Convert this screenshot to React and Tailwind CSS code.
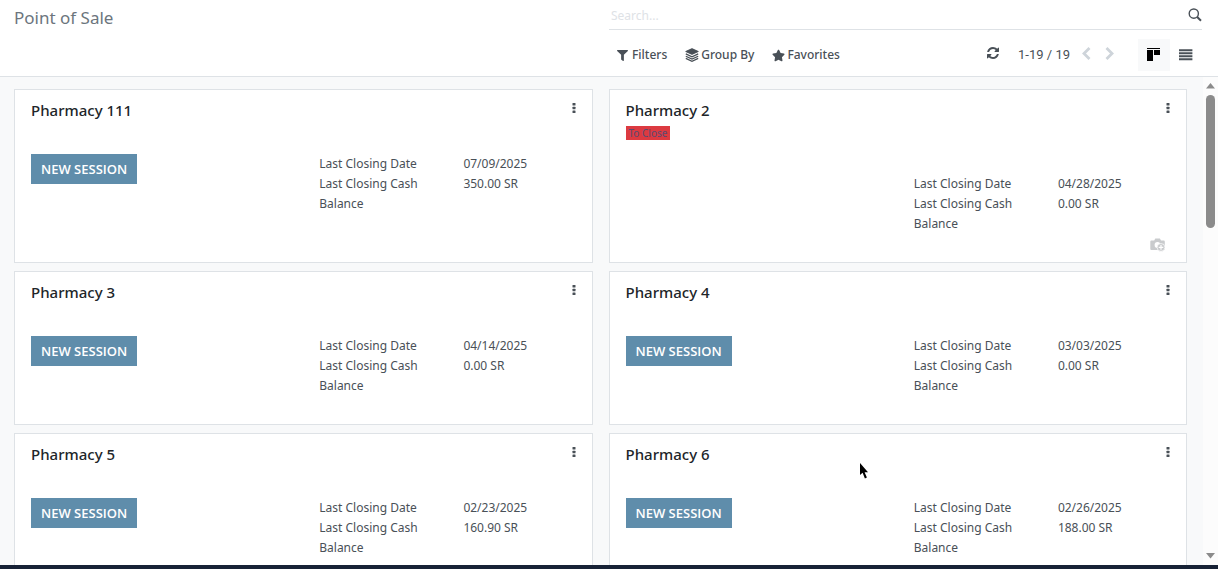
import React from "react";
import { FaFilter, FaStar } from "react-icons/fa";

const pointsOfSale = [
  { id: 1, name: "Pharmacy 111", date: "07/09/2025", balance: "350.00 SR" },
  { id: 2, name: "Pharmacy 2", date: "04/28/2025", balance: "0.00 SR", toClose: true },
  { id: 3, name: "Pharmacy 3", date: "04/14/2025", balance: "0.00 SR" },
  { id: 4, name: "Pharmacy 4", date: "03/03/2025", balance: "0.00 SR" },
  { id: 5, name: "Pharmacy 5", date: "02/23/2025", balance: "160.90 SR" },
  { id: 6, name: "Pharmacy 6", date: "02/26/2025", balance: "188.00 SR" },
];

const SearchIcon = () => (
  <svg width="14" height="14" viewBox="0 0 14 14" fill="none" stroke="currentColor" strokeWidth="1.4">
    <circle cx="5.8" cy="5.6" r="4.6" />
    <path d="M9.2 9l3.8 3.8" strokeWidth="2" />
  </svg>
);

const LayersIcon = () => (
  <svg width="14" height="14" viewBox="0 0 14 14" fill="none" stroke="currentColor" strokeWidth="1.2">
    <path d="M7 .8l6 2.7L7 6.2 1 3.5z" fill="currentColor" strokeLinejoin="round" />
    <path d="M.8 5.9L7 8.8l6.200-2.900" />
    <path d="M.8 8.2L7 11.1l6.200-2.900" />
    <path d="M.8 10.4L7 13.3l6.200-2.900" />
  </svg>
);

const RefreshIcon = () => (
  <svg width="14" height="14" viewBox="0 0 1792 1792" fill="currentColor">
    <path d="M1639 1056q0 5-1 7-64 268-268 434.5t-478 166.5q-146 0-282.5-55t-243.5-157l-129 129q-19 19-45 19t-45-19-19-45v-448q0-26 19-45t45-19h448q26 0 45 19t19 45-19 45l-137 137q71 66 161 102t187 36q134 0 250-65t186-179q11-17 53-117 8-23 30-23h192q13 0 22.5 9.5t9.5 22.5zm25-800v448q0 26-19 45t-45 19h-448q-26 0-45-19t-19-45 19-45l138-138q-148-137-349-137-134 0-250 65t-186 179q-11 17-53 117-8 23-30 23h-199q-13 0-22.5-9.5t-9.5-22.5v-7q65-268 270-434.5t480-166.5q146 0 284 55.5t245 156.5l130-129q19-19 45-19t45 19 19 45z" />
  </svg>
);

const KanbanIcon = () => (
  <svg width="14" height="14" viewBox="0 0 14 14" fill="currentColor" shapeRendering="crispEdges">
    <path d="M0 0h13v1H0zM0 2h6v11H0zM7 2h6v5H7z" />
  </svg>
);

const ListIcon = () => (
  <svg width="14" height="12" viewBox="0 0 14 12" fill="currentColor">
    <path d="M0 .2h13.4v2H0zM0 3.2h13.4v2H0zM0 6.2h13.4v2H0zM0 9.2h13.4v2H0z" />
  </svg>
);

const DotsIcon = () => (
  <svg width="4" height="12" viewBox="0 0 4 12" fill="currentColor">
    <rect x=".5" y="1" width="3" height="2.6" rx=".5" />
    <rect x=".5" y="4.7" width="3" height="2.6" rx=".5" />
    <rect x=".5" y="8.4" width="3" height="2.6" rx=".5" />
  </svg>
);

const CameraPlusIcon = () => (
  <svg width="16" height="14" viewBox="0 0 16 14">
    <path d="M1.6 2.4h2.6L5.3.6h4.6L11 2.4h2.5c.8 0 1.3.5 1.3 1.3v7c0 .8-.5 1.3-1.3 1.3H1.6C.8 12 .3 11.5.3 10.7v-7c0-.8.5-1.3 1.3-1.3z" fill="#c9cbcd" />
    <circle cx="7.5" cy="6.9" r="2.9" fill="#fff" />
    <circle cx="11" cy="9.4" r="3.9" fill="#c9cbcd" stroke="#fff" strokeWidth=".7" />
    <path d="M11 7.1v4.6M8.7 9.4h4.6" stroke="#fff" strokeWidth="1.2" />
  </svg>
);

const ControlPanel = () => {
  return (
    <header className="grid shrink-0 grid-cols-2 gap-4 border-b border-[#dee2e6] bg-white pr-4 text-[#495057]">
      <h1 className="pt-1 pl-3.5 text-[17px] leading-7 text-[#6c757d]">Point of Sale</h1>
      <div>
        <div className="flex h-[30px] items-center border-b border-[#dee2e6]">
          <input
            type="text"
            aria-label="Search"
            placeholder="Search..."
            className="min-w-0 flex-1 px-0.5 pt-0.5 text-xs outline-none placeholder:text-[#dee2e6]"
          />
          <button type="button" aria-label="Search">
            <SearchIcon />
          </button>
        </div>
        <div className="flex h-[46px] items-center justify-between pt-1">
          <div className="flex items-center gap-4.5 pl-2 text-xs font-medium">
            <button type="button" className="flex items-center gap-1">
              <FaFilter size={11} />
              Filters
            </button>
            <button type="button" className="flex items-center gap-0.5">
              <LayersIcon />
              Group By
            </button>
            <button type="button" className="flex items-center gap-0.5">
              <FaStar size={13} />
              Favorites
            </button>
          </div>
          <div className="flex items-center">
            <button type="button" aria-label="Refresh" className="mr-4.5 pb-1">
              <RefreshIcon />
            </button>
            <span className="mr-3 font-[Roboto,sans-serif] text-[13px]">1-19 / 19</span>
            <div className="mr-6 flex gap-3.5 pb-1 text-[#ced4da]">
              <button type="button" aria-label="Previous">
                <svg width="9" height="13" viewBox="0 0 9 13" fill="none" stroke="currentColor" strokeWidth="2.8">
                  <path d="M7.5 1L2 6.5 7.5 12" />
                </svg>
              </button>
              <button type="button" aria-label="Next">
                <svg width="9" height="13" viewBox="0 0 9 13" fill="none" stroke="currentColor" strokeWidth="2.8">
                  <path d="M1.5 1L7 6.5 1.5 12" />
                </svg>
              </button>
            </div>
            <button type="button" aria-label="Kanban view" className="flex size-8 items-center justify-center bg-[#f8f9fa] text-black">
              <KanbanIcon />
            </button>
            <button type="button" aria-label="List view" className="flex size-8 items-center justify-center">
              <ListIcon />
            </button>
          </div>
        </div>
      </div>
    </header>
  );
};

const PosCard = ({ pos }) => {
  return (
    <article className="flex flex-col border border-[#dee2e6] bg-white px-4 pt-2 pb-2.5">
      <div className="flex items-start justify-between">
        <h2 className="text-[15px] leading-6 font-medium text-[#212529]">{pos.name}</h2>
        <button type="button" aria-label={`${pos.name} menu`} className="pt-1 text-[#495057]">
          <DotsIcon />
        </button>
      </div>
      {pos.toClose && (
        <div className="flex h-5 items-start pt-1">
          <span className="bg-[#dc3a41] px-[3px] text-[10px] leading-[14px] text-[#5a4a72]">To Close</span>
        </div>
      )}
      <div className="grid grid-cols-2 gap-8 pt-8">
        <div>
          {!pos.toClose && (
            <button
              type="button"
              className="bg-[#5f8dab] px-2.5 py-[5px] font-['Open_Sans',sans-serif] text-[13px] leading-5 font-semibold whitespace-nowrap text-white"
            >
              NEW SESSION
            </button>
          )}
        </div>
        <dl className="grid grid-cols-2 gap-x-8 text-xs leading-5 text-[#495057]">
          <dt>Last Closing Date</dt>
          <dd>{pos.date}</dd>
          <dt>Last Closing Cash Balance</dt>
          <dd>{pos.balance}</dd>
        </dl>
      </div>
      <div className="flex h-[18px] items-end justify-end pr-1">
        {pos.toClose && <CameraPlusIcon />}
      </div>
    </article>
  );
};

const Scrollbar = () => {
  return (
    <div className="flex w-[15px] shrink-0 flex-col items-center bg-[#fcfcfc] py-1.5 text-[#8b8b8b]" aria-hidden="true">
      <svg width="9" height="6" viewBox="0 0 9 6" fill="currentColor">
        <path d="M4.5 0L9 5.5H0z" />
      </svg>
      <div className="mt-1.5 w-[9px] flex-1">
        <div className="h-[29%] rounded-full bg-[#8b8b8b]" />
      </div>
      <svg width="9" height="6" viewBox="0 0 9 6" fill="currentColor">
        <path d="M4.5 5.5L9 0H0z" />
      </svg>
    </div>
  );
};

export default function App() {
  return (
    <div className="relative flex h-screen flex-col overflow-hidden bg-[#f8f9fa] font-['Noto_Sans',sans-serif]">
      <ControlPanel />
      <div className="flex min-h-0 flex-1">
        <main className="min-w-0 flex-1 overflow-hidden pt-3 pr-4 pl-3.5">
          <div className="grid grid-cols-2 gap-x-4 gap-y-2">
            {pointsOfSale.map((pos) => (
              <PosCard key={pos.id} pos={pos} />
            ))}
          </div>
        </main>
        <Scrollbar />
      </div>
      <footer className="h-1 shrink-0 bg-[#172236]" />
      <svg className="absolute top-[462px] left-[859px]" width="11" height="18" viewBox="0 0 11 18">
        <path d="M1 1v12l2.6-2.2 2.3 5.6 2-.9-2.3-5.3H9z" />
      </svg>
    </div>
  );
}
